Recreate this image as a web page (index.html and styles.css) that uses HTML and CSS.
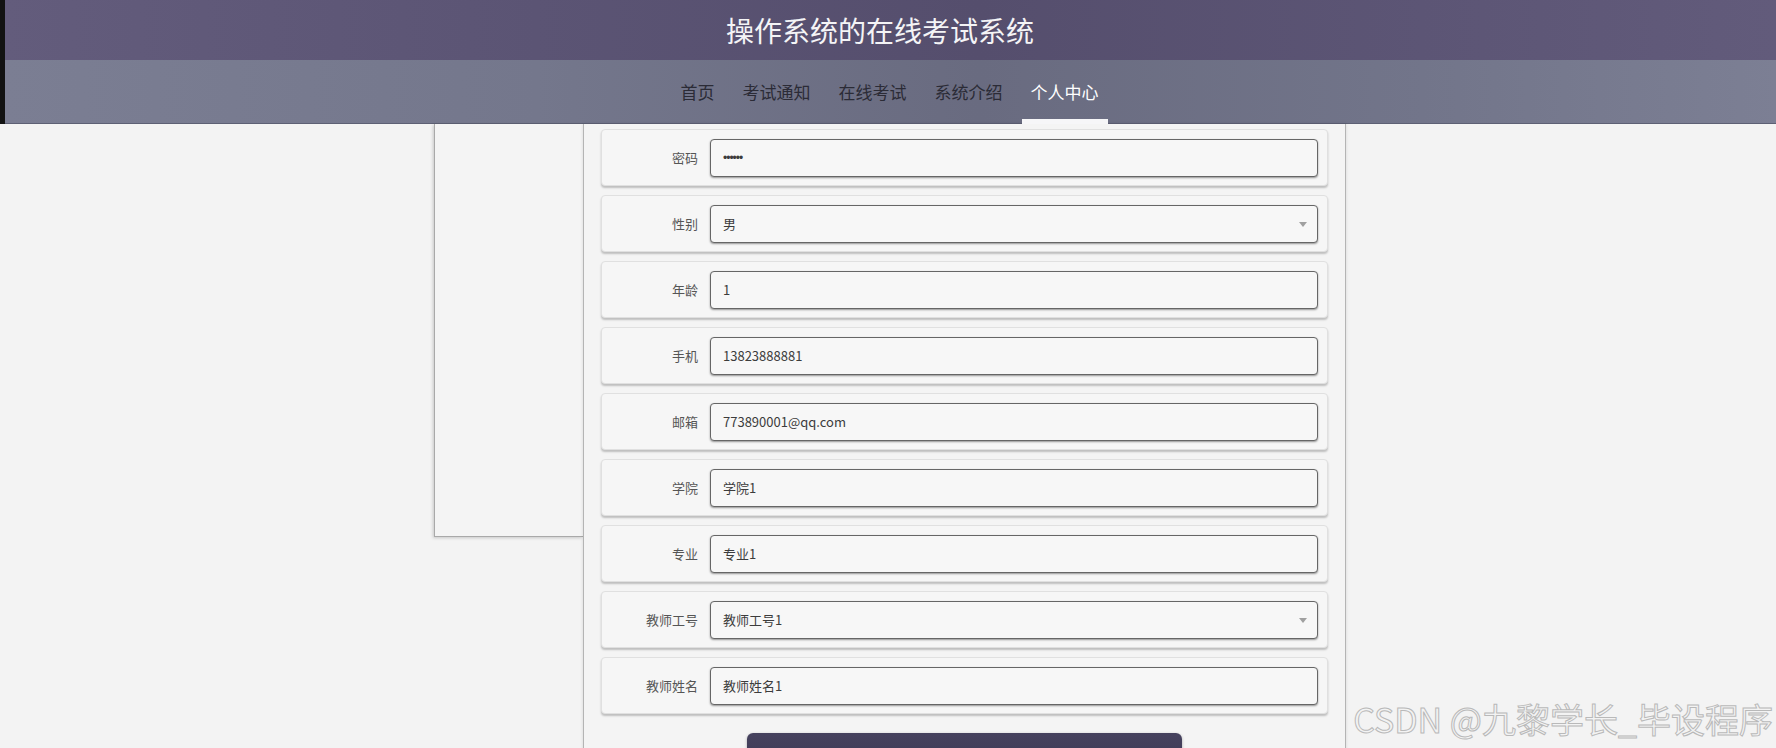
FILE: index.html
```html
<!DOCTYPE html>
<html lang="zh-CN">
<head>
<meta charset="utf-8">
<title>操作系统的在线考试系统</title>
<link rel="stylesheet" href="styles.css">
</head>
<body>
<header class="site-header">
  <div class="title-bar"><h1 class="site-title">操作系统的在线考试系统</h1></div>
  <nav class="nav-bar">
    <a class="nav-item">首页</a>
    <a class="nav-item">考试通知</a>
    <a class="nav-item">在线考试</a>
    <a class="nav-item">系统介绍</a>
    <a class="nav-item active">个人中心</a>
  </nav>
</header>
<main class="page">
  <aside class="side-panel"></aside>
  <section class="form-panel">
    <form class="profile-form">
      <div class="form-row"><label class="form-label">密码</label><input class="field password" type="password" value="123456"></div>
      <div class="form-row"><label class="form-label">性别</label><div class="select-wrap"><select class="field select"><option>男</option><option>女</option></select></div></div>
      <div class="form-row"><label class="form-label">年龄</label><input class="field" type="text" value="1"></div>
      <div class="form-row"><label class="form-label">手机</label><input class="field" type="text" value="13823888881"></div>
      <div class="form-row"><label class="form-label">邮箱</label><input class="field" type="text" value="773890001@qq.com"></div>
      <div class="form-row"><label class="form-label">学院</label><input class="field" type="text" value="学院1"></div>
      <div class="form-row"><label class="form-label">专业</label><input class="field" type="text" value="专业1"></div>
      <div class="form-row"><label class="form-label">教师工号</label><div class="select-wrap"><select class="field select"><option>教师工号1</option></select></div></div>
      <div class="form-row"><label class="form-label">教师姓名</label><input class="field" type="text" value="教师姓名1"></div>
      <div class="actions"><button class="submit-btn" type="button">更新信息</button></div>
    </form>
  </section>
</main>
<div class="watermark">CSDN @九黎学长_毕设程序</div>
</body>
</html>
```

FILE: styles.css
```css
html, body {
  margin: 0;
  padding: 0;
  height: 100%;
  overflow: hidden;
}

body {
  background: #f3f3f3;
  font-family: "Noto Sans CJK SC", "Noto Sans", sans-serif;
  position: relative;
}

.site-header {
  border-left: 5px solid #121212;
}

.title-bar {
  height: 60px;
  display: flex;
  align-items: center;
  justify-content: center;
  padding-right: 21px;
  background: linear-gradient(90deg, #635c7c 0%, #5b5474 30%, #554e6d 55%, #5c5575 80%, #625b7b 100%);
}

.site-title {
  margin: 0;
  font-size: 28px;
  font-weight: 400;
  color: #f4f4f6;
  line-height: 1;
}

.nav-bar {
  height: 64px;
  box-sizing: border-box;
  display: flex;
  justify-content: center;
  align-items: stretch;
  gap: 10px;
  padding-right: 2px;
  background: linear-gradient(90deg, #7b7e93 0%, #74778c 30%, #696b80 55%, #72758a 80%, #7c7f94 100%);
  border-bottom: 1px solid #5d6074;
}

.nav-item {
  position: relative;
  display: flex;
  align-items: center;
  padding: 0 9px;
  font-size: 17px;
  color: #2b2b36;
  text-decoration: none;
}

.nav-item.active {
  color: #ffffff;
}

.nav-item.active::after {
  content: "";
  position: absolute;
  left: 0;
  right: 0;
  bottom: -1px;
  height: 5px;
  background: #f6f6f8;
}

.page {
  display: flex;
  justify-content: center;
  padding-left: 4px;
}

.side-panel {
  width: 149px;
  height: 413px;
  box-sizing: border-box;
  border-left: 1px solid #a9a9a9;
  border-bottom: 1px solid #a9a9a9;
  background: #f4f4f4;
  box-shadow: -1px 1px 3px rgba(0, 0, 0, 0.18);
}

.form-panel {
  width: 763px;
  box-sizing: border-box;
  border-left: 1px solid #b4b4b4;
  border-right: 1px solid #b4b4b4;
  padding: 5px 17px 0;
  background: #f4f4f4;
  box-shadow: 0 0 3px rgba(0, 0, 0, 0.12);
  height: 700px;
}

.profile-form {
  display: flex;
  flex-direction: column;
  gap: 9px;
}

.form-row {
  height: 57px;
  box-sizing: border-box;
  display: flex;
  align-items: center;
  gap: 12px;
  padding-right: 9px;
  background: #f6f6f6;
  border: 1px solid #e0e0e0;
  border-radius: 4px;
  box-shadow: 0 2px 2px rgba(0, 0, 0, 0.22);
}

.form-label {
  width: 96px;
  flex: none;
  text-align: right;
  font-size: 13px;
  color: #555555;
}

.field {
  flex: 1;
  width: 100%;
  height: 38px;
  box-sizing: border-box;
  padding: 0 12px;
  margin: 0;
  font-family: "Noto Sans CJK SC", "Noto Sans", sans-serif;
  font-size: 13px;
  color: #3c3c3c;
  background: #f7f7f7;
  border: 1px solid #666666;
  border-radius: 4px;
  box-shadow: 0 1px 2px rgba(0, 0, 0, 0.4);
  outline: none;
}

.field.password {
  font-family: "Liberation Sans", Arial, sans-serif;
  font-size: 12px;
  letter-spacing: -1px;
}

.select-wrap {
  flex: 1;
  position: relative;
  display: flex;
}

.select {
  appearance: none;
  -webkit-appearance: none;
}

.select-wrap::after {
  content: "";
  position: absolute;
  right: 11px;
  top: 17px;
  border-left: 4px solid transparent;
  border-right: 4px solid transparent;
  border-top: 5px solid #a0a0a0;
}

.actions {
  display: flex;
  justify-content: center;
  padding-top: 10px;
}

.submit-btn {
  width: 435px;
  height: 50px;
  border: none;
  border-radius: 6px;
  background: linear-gradient(180deg, #46425e 0%, #3a3651 100%);
  color: #ffffff;
  font-family: "Noto Sans CJK SC", "Noto Sans", sans-serif;
  font-size: 16px;
  box-shadow: 0 1px 3px rgba(0, 0, 0, 0.3);
}

.watermark {
  position: absolute;
  right: 3px;
  bottom: 12px;
  font-size: 34px;
  line-height: 34px;
  color: #f3f3f3;
  -webkit-text-stroke: 1px #b9b9b9;
  white-space: nowrap;
}
```
